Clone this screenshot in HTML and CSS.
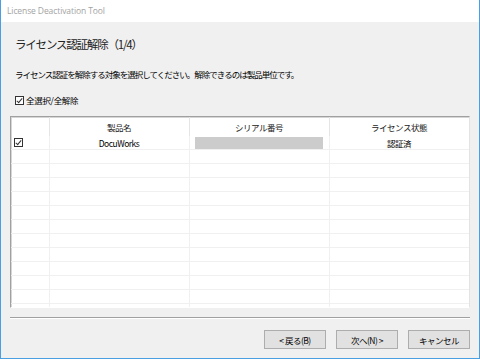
FILE: index.html
```html
<!DOCTYPE html>
<html lang="ja">
<head>
    <meta charset="UTF-8">
    <meta name="viewport" content="width=device-width, initial-scale=1.0">
    <title>License Deactivation Tool</title>
<link rel="stylesheet" href="styles.css">
</head>
<body>
    <div class="window">
        <div class="titlebar">License Deactivation Tool</div>
        <div class="content">
            <h1 class="heading">ライセンス認証解除（1/4）</h1>
            <p class="desc">ライセンス認証を解除する対象を選択してください。解除できるのは製品単位です。</p>
            <label class="check-all"><span class="checkbox checked"></span>全選択/全解除</label>

            <div class="list">
                <table class="grid">
                    <colgroup>
                        <col class="c-check">
                        <col class="c-name">
                        <col class="c-serial">
                        <col class="c-status">
                    </colgroup>
                    <thead>
                        <tr>
                            <th></th>
                            <th>製品名</th>
                            <th>シリアル番号</th>
                            <th>ライセンス状態</th>
                        </tr>
                    </thead>
                    <tbody id="rows">
                        <tr>
                            <td class="cell-check"><span class="checkbox checked"></span></td>
                            <td>DocuWorks</td>
                            <td><span class="serial-mask"></span></td>
                            <td>認証済</td>
                        </tr>
                    </tbody>
                </table>
            </div>

            <div class="separator"></div>

            <div class="actions">
                <button class="btn">&lt; 戻る(B)</button>
                <button class="btn">次へ(N) &gt;</button>
                <button class="btn">キャンセル</button>
            </div>
        </div>
    </div>
    <script>
        // pad the list with blank rows like the native list view
        const rows = document.getElementById("rows");
        for (let i = 0; i < 12; i++) {
            const tr = document.createElement("tr");
            tr.innerHTML = "<td></td><td></td><td></td><td></td>";
            rows.appendChild(tr);
        }
    </script>
</body>
</html>
```

FILE: styles.css
```css
body {
  margin: 0;
  background: #f0f0f0;
  font-family: "Noto Sans CJK JP", "Noto Sans", sans-serif;
  color: #000;
}

.window {
  width: 480px;
  height: 359px;
  box-sizing: border-box;
  border: 1px solid #4a9fe2;
  border-top: none;
  background: #f0f0f0;
  display: flex;
  flex-direction: column;
  overflow: hidden;
}

.titlebar {
  height: 22px;
  background: #fff;
  color: #a3a3a3;
  font-family: "Open Sans", "Noto Sans", sans-serif;
  font-size: 8.5px;
  line-height: 22px;
  padding-left: 6px;
  letter-spacing: -0.1px;
}

.content {
  flex: 1;
  display: flex;
  flex-direction: column;
  padding: 0 9px;
}

.heading {
  font-size: 11.5px;
  font-weight: normal;
  margin: 14px 0 0 5px;
  line-height: 16px;
  letter-spacing: -1.2px;
  color: #222;
}

.desc {
  font-size: 8.5px;
  line-height: 12px;
  margin: 16px 0 0 5px;
  letter-spacing: -1px;
}

.check-all {
  display: flex;
  align-items: center;
  gap: 2px;
  font-size: 8.5px;
  line-height: 12px;
  margin: 14px 0 0 5px;
  letter-spacing: -0.3px;
}

.checkbox {
  display: inline-block;
  width: 9px;
  height: 9px;
  box-sizing: border-box;
  border: 1px solid #333;
  background: #fff;
  position: relative;
}

.checkbox.checked::after {
  content: "";
  position: absolute;
  left: 2px;
  top: 0px;
  width: 2px;
  height: 5px;
  border: solid #333;
  border-width: 0 1px 1px 0;
  transform: rotate(40deg);
}

.list {
  margin-top: 10px;
  height: 192px;
  box-sizing: border-box;
  border-top: 1px solid #a0a0a0;
  border-left: 1px solid #a0a0a0;
  border-right: 1px solid #e3e3e3;
  border-bottom: 1px solid #ffffff;
  box-shadow: inset 1px 1px 0 #d6d6d6;
  background: #fff;
  overflow: hidden;
}

.grid {
  border-collapse: collapse;
  table-layout: fixed;
  width: 458px;
  font-size: 8.5px;
  line-height: 12px;
  letter-spacing: -0.5px;
}

.c-check { width: 38px; }
.c-name { width: 140px; }
.c-serial { width: 140px; }
.c-status { width: 140px; }

.grid th {
  height: 19px;
  padding: 0;
  font-weight: normal;
  text-align: center;
  border-right: 1px solid #e5e5e5;
  color: #222;
}

.grid td {
  height: 13px;
  padding: 0;
  text-align: center;
  border-right: 1px solid #f0f0f0;
  border-bottom: 1px solid #f0f0f0;
}

.cell-check {
  text-align: left !important;
}

.cell-check .checkbox {
  display: block;
  margin-left: 3px;
}

.serial-mask {
  display: block;
  margin: 0 6px 0 5px;
  height: 12px;
  background: #cccccc;
}

.separator {
  margin-top: 9px;
  height: 1px;
  background: #a0a0a0;
  border-bottom: 1px solid #fff;
}

.actions {
  display: flex;
  justify-content: flex-end;
  gap: 10px;
  margin-top: 11px;
}

.btn {
  width: 62px;
  height: 19px;
  padding: 0;
  border: 1px solid #adadad;
  background: #e1e1e1;
  font-family: "Noto Sans CJK JP", sans-serif;
  font-size: 8.5px;
  letter-spacing: -0.5px;
  color: #000;
}
```
